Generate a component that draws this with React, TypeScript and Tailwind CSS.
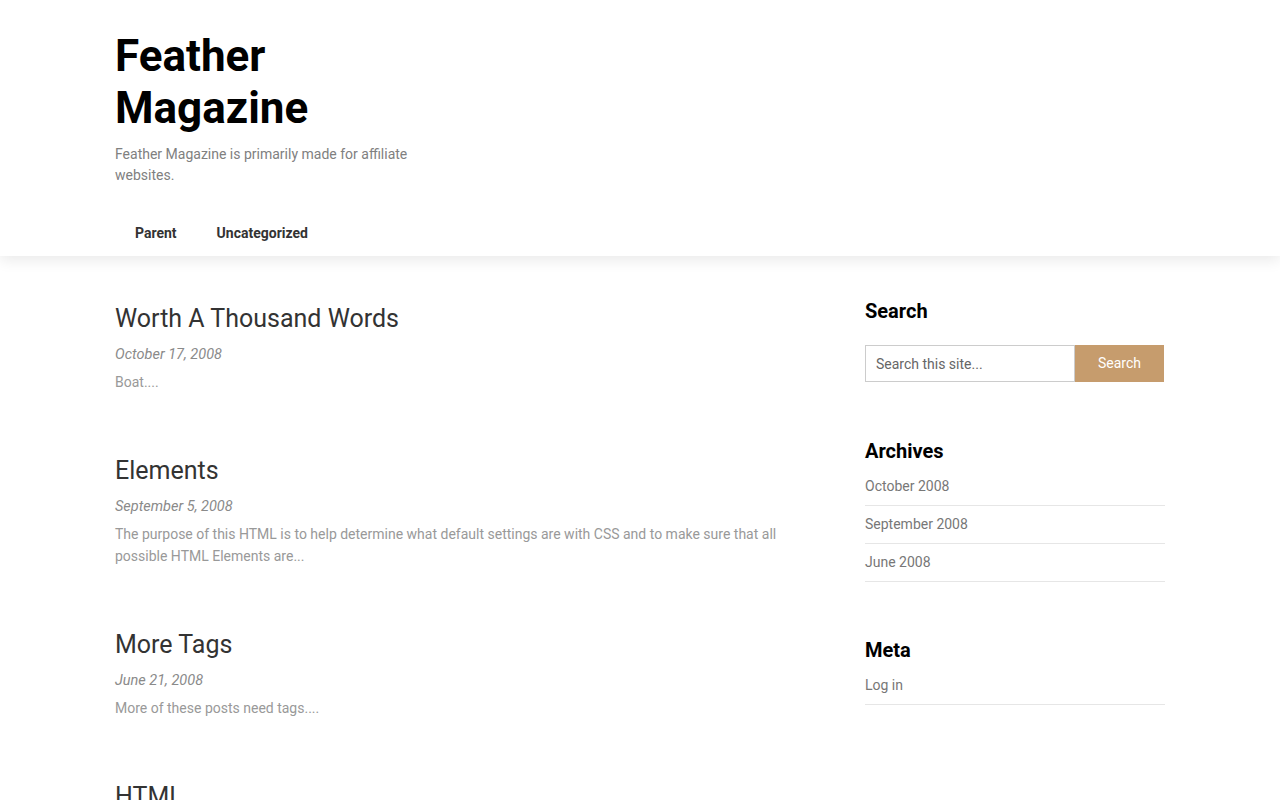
import React from "react";

const posts = [
  { title: "Worth A Thousand Words", date: "October 17, 2008", excerpt: "Boat...." },
  {
    title: "Elements",
    date: "September 5, 2008",
    excerpt:
      "The purpose of this HTML is to help determine what default settings are with CSS and to make sure that all possible HTML Elements are...",
  },
  { title: "More Tags", date: "June 21, 2008", excerpt: "More of these posts need tags...." },
  { title: "HTML", date: "June 21, 2008", excerpt: "Lorem ipsum...." },
];

export default function App() {
  return (
    <div className="h-[800px] overflow-hidden bg-white font-['Roboto',sans-serif]">
      <header className="relative z-10 bg-white shadow-[0_4px_14px_rgba(0,0,0,0.09)]">
        <div className="mx-auto w-[1050px] pt-[30px]">
          <div className="w-[320px]">
            <h1 className="text-[44px] font-bold leading-[52px] text-black">Feather Magazine</h1>
            <p className="mt-[10px] text-[14px] leading-[21px] text-[#808080]">
              Feather Magazine is primarily made for affiliate websites.
            </p>
          </div>
          <nav className="mt-[24px] flex h-[46px] items-center">
            <a className="px-5 text-[14px] font-bold text-[#333]">Parent</a>
            <a className="px-5 text-[14px] font-bold text-[#333]">Uncategorized</a>
          </nav>
        </div>
      </header>
      <div className="mx-auto flex w-[1050px] gap-[50px]">
        <main className="w-[700px] pt-[48px]">
          {posts.map((p) => (
            <article key={p.title} className="mb-[63px]">
              <h2 className="text-[25px] leading-[30px] text-[#333]">{p.title}</h2>
              <div className="mt-[11px] text-[14.5px] italic leading-[20px] text-[#8a8a8a]">{p.date}</div>
              <p className="mt-[6px] text-[14px] leading-[22px] text-[#999]">{p.excerpt}</p>
            </article>
          ))}
        </main>
        <aside className="w-[300px] pt-[43px]">
          <section>
            <h3 className="text-[20px] font-bold leading-[24px] text-black">Search</h3>
            <div className="mt-[22px] flex h-[37px]">
              <input
                className="h-full w-[210px] border border-[#ccc] px-[10px] text-[14px] text-[#555] placeholder:text-[#666] outline-none"
                placeholder="Search this site..."
              />
              <button className="h-full w-[89px] bg-[#c69c6d] text-[14px] text-white">Search</button>
            </div>
          </section>
          <section className="mt-[57px]">
            <h3 className="text-[20px] font-bold leading-[24px] text-black">Archives</h3>
            <ul className="mt-[5px]">
              {["October 2008", "September 2008", "June 2008"].map((a) => (
                <li key={a} className="border-b border-[#e6e6e6] pt-[7px] pb-[8px] text-[14px] leading-[22px] text-[#777]">
                  {a}
                </li>
              ))}
            </ul>
          </section>
          <section className="mt-[56px]">
            <h3 className="text-[20px] font-bold leading-[24px] text-black">Meta</h3>
            <ul className="mt-[5px]">
              <li className="border-b border-[#e6e6e6] pt-[7px] pb-[8px] text-[14px] leading-[22px] text-[#777]">Log in</li>
            </ul>
          </section>
        </aside>
      </div>
    </div>
  );
}
